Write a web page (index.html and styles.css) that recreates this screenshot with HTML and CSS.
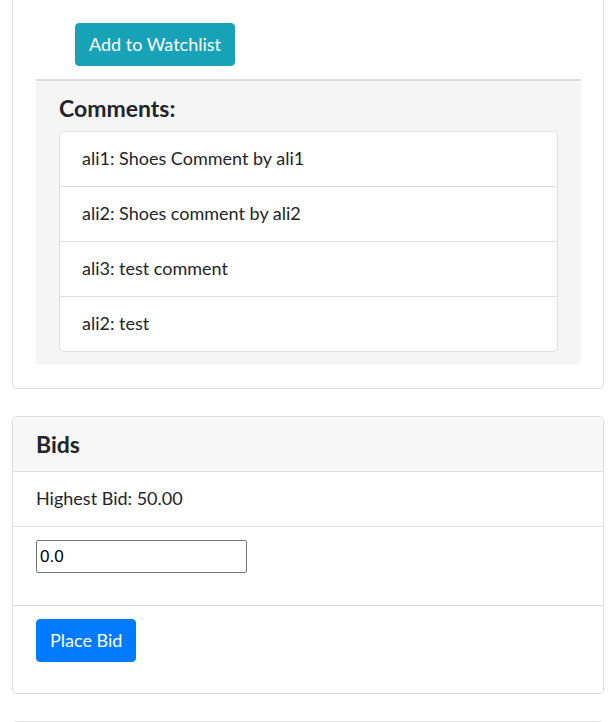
FILE: index.html
```html
<!DOCTYPE html>
<html lang="en">
<head>
<meta charset="utf-8">
<title>Listing</title>
<link rel="stylesheet" href="styles.css">
</head>
<body>
<div class="page">
  <div class="card card-cut">
    <div class="card-body">
      <div class="watch-row">
        <button class="btn btn-info" type="button">Add to Watchlist</button>
      </div>
      <div class="comments">
        <h5 class="comments-title">Comments:</h5>
        <ul class="list-group">
          <li class="list-group-item">ali1: Shoes Comment by ali1</li>
          <li class="list-group-item">ali2: Shoes comment by ali2</li>
          <li class="list-group-item">ali3: test comment</li>
          <li class="list-group-item">ali2: test</li>
        </ul>
      </div>
    </div>
  </div>

  <div class="card card-bids">
    <div class="card-header"><h5 class="card-title">Bids</h5></div>
    <div class="card-section">Highest Bid: 50.00</div>
    <form class="bid-form">
      <div class="card-section input-section">
        <input class="bid-input" type="text" value="0.0">
      </div>
      <div class="card-section footer-section">
        <button class="btn btn-primary" type="button">Place Bid</button>
      </div>
    </form>
  </div>

  <div class="card card-next"></div>
</div>
</body>
</html>
```
FILE: styles.css
```css
* { box-sizing: border-box; }
html, body { margin: 0; padding: 0; background: #fff; }
body {
  font-family: Lato, "Noto Sans", sans-serif;
  font-size: 18px;
  line-height: 27px;
  color: #212529;
}
.page {
  padding: 0 9px 0 12px;
  display: flex;
  flex-direction: column;
  height: 722px;
  overflow: hidden;
}
.card {
  border: 1px solid #dfdfdf;
  border-radius: 5px;
  background: #fff;
}
.card-cut {
  border-top: 0;
  border-radius: 0 0 5px 5px;
}
.card-bids { margin-top: 27px; }
.card-body {
  padding: 23px 22px 23px 23px;
}
.watch-row {
  padding: 0 0 13px 39px;
}
.btn {
  font-family: inherit;
  font-size: 18px;
  line-height: 27px;
  border: 1px solid transparent;
  border-radius: 4px;
  padding: 7px 13px;
  color: #fff;
  cursor: pointer;
}
.btn-info { background: #17a2b8; border-color: #17a2b8; }
.btn-primary { background: #007bff; border-color: #007bff; }
.comments {
  background: #f5f5f5;
  border-top: 2px solid #dcdcdc;
  border-radius: 0 0 4px 4px;
  padding: 14px 23px 13px 23px;
}
.comments-title {
  margin: 0 0 9px 0;
  font-size: 23px;
  line-height: 27px;
  font-weight: 700;
}
.list-group {
  list-style: none;
  margin: 0;
  padding: 0;
  background: #fff;
  border: 1px solid #dfdfdf;
  border-radius: 5px;
}
.list-group-item {
  padding: 13px 22px 14px;
  border-top: 1px solid #dfdfdf;
}
.list-group-item:first-child { border-top: 0; }
.card-header {
  background: #f7f7f7;
  border-bottom: 1px solid #dfdfdf;
  border-radius: 5px 5px 0 0;
  padding: 14px 23px 13px;
}
.card-title {
  margin: 0;
  font-size: 23px;
  line-height: 27px;
  font-weight: 700;
}
.card-section {
  padding: 13px 23px 14px;
  border-bottom: 1px solid #dfdfdf;
}
.bid-form { margin: 0; }
.input-section { padding: 13px 23px 32px; }
.footer-section { border-bottom: 0; padding: 13px 23px 31px; }
.bid-input {
  width: 211px;
  height: 33px;
  border: 1px solid #767676;
  border-radius: 2px;
  font-family: "Liberation Sans", Arial, sans-serif;
  font-size: 17px;
  padding: 1px 3px;
  color: #000;
  display: block;
}
.card-next {
  margin-top: 27px;
  border-bottom: 0;
  border-radius: 5px 5px 0 0;
  min-height: 40px;
  flex-shrink: 0;
}
```
